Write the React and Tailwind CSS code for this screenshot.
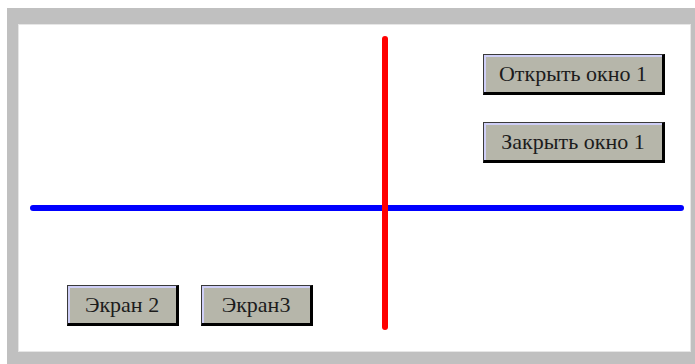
import React from 'react';

const RetroButton = ({ children, width = 'w-[182px]' }) => (
  <button
    type="button"
    className={`${width} h-[41px] bg-[#b6b6aa] border-t border-l border-[#3a3a3a] border-r-[3px] border-b-[3px] border-r-black border-b-black shadow-[inset_2px_2px_0_#cfcff7] text-[22px] text-[#1c1c1c] leading-none flex items-center justify-center`}
    style={{ fontFamily: '"Liberation Serif", "DejaVu Serif", serif' }}
  >
    {children}
  </button>
);

const App = () => {
  return (
    <div className="w-[695px] h-[364px] overflow-hidden bg-white pl-[7px] pt-[8px]">
      <div className="w-[688px] h-[356px] bg-[#c0c0c0] pl-[11px] pt-[16px]">
        <div className="relative w-[673px] h-[328px] bg-white border border-[#e6e6e6]">
          {/* crosshair lines */}
          <svg className="absolute inset-0 pointer-events-none" width="673" height="328">
            <line x1="14" y1="183" x2="662" y2="183" stroke="#0000ff" strokeWidth="6" strokeLinecap="round" />
            <line x1="366" y1="14" x2="366" y2="302" stroke="#ff0000" strokeWidth="6" strokeLinecap="round" />
          </svg>

          <div className="relative h-full flex flex-col justify-between">
            <div className="flex flex-col items-end gap-[27px] pt-[29px] pr-[25px]">
              <RetroButton>Открыть окно 1</RetroButton>
              <RetroButton>Закрыть окно 1</RetroButton>
            </div>
            <div className="flex gap-[22px] pl-[48px] pb-[25px]">
              <RetroButton width="w-[112px]">Экран 2</RetroButton>
              <RetroButton width="w-[112px]">Экран3</RetroButton>
            </div>
          </div>
        </div>
      </div>
    </div>
  );
};

export default App;
